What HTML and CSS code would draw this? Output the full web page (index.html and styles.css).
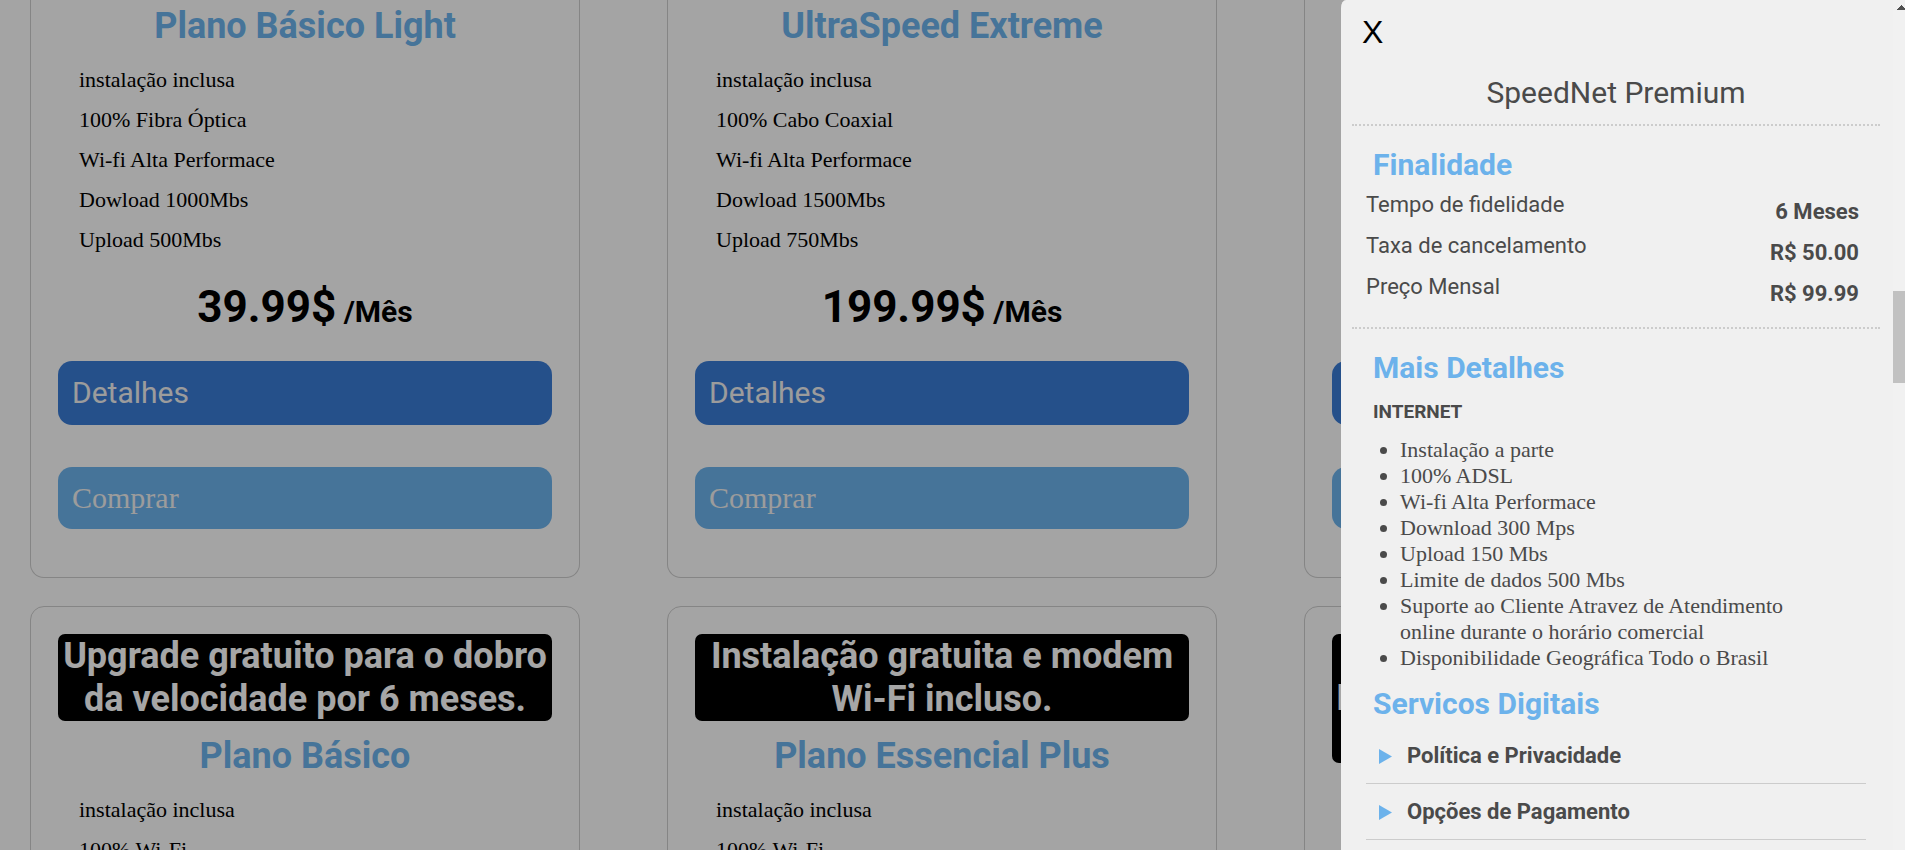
FILE: index.html
```html
<!DOCTYPE html>
<html lang="pt-BR">
<head>
<meta charset="utf-8">
<title>SpeedNet Premium</title>
<link rel="stylesheet" href="styles.css">
</head>
<body>
<main class="plans">
  <article class="plan plan--scrolled">
    <h2 class="plan__name">Plano Básico Light</h2>
    <ul class="plan__features">
      <li>instalação inclusa</li>
      <li>100% Fibra Óptica</li>
      <li>Wi-fi Alta Performace</li>
      <li>Dowload 1000Mbs</li>
      <li>Upload 500Mbs</li>
    </ul>
    <p class="plan__price">39.99$<small> /Mês</small></p>
    <button class="btn btn--details" type="button">Detalhes</button>
    <button class="btn btn--buy" type="button">Comprar</button>
  </article>
  <article class="plan plan--scrolled">
    <h2 class="plan__name">UltraSpeed Extreme</h2>
    <ul class="plan__features">
      <li>instalação inclusa</li>
      <li>100% Cabo Coaxial</li>
      <li>Wi-fi Alta Performace</li>
      <li>Dowload 1500Mbs</li>
      <li>Upload 750Mbs</li>
    </ul>
    <p class="plan__price">199.99$<small> /Mês</small></p>
    <button class="btn btn--details" type="button">Detalhes</button>
    <button class="btn btn--buy" type="button">Comprar</button>
  </article>
  <article class="plan plan--scrolled plan--end">
    <button class="btn btn--details" type="button" aria-label="Detalhes"></button>
    <button class="btn btn--buy" type="button" aria-label="Comprar"></button>
  </article>
  <article class="plan">
    <p class="plan__promo">Upgrade gratuito para o dobro da velocidade por 6 meses.</p>
    <h2 class="plan__name">Plano Básico</h2>
    <ul class="plan__features">
      <li>instalação inclusa</li>
      <li>100% Wi-Fi</li>
    </ul>
  </article>
  <article class="plan">
    <p class="plan__promo">Instalação gratuita e modem Wi-Fi incluso.</p>
    <h2 class="plan__name">Plano Essencial Plus</h2>
    <ul class="plan__features">
      <li>instalação inclusa</li>
      <li>100% Wi-Fi</li>
    </ul>
  </article>
  <article class="plan">
    <p class="plan__promo plan__promo--tall">I</p>
  </article>
</main>

<div class="backdrop"></div>

<aside class="drawer" role="dialog" aria-labelledby="drawer-title">
  <button class="drawer__close" type="button">X</button>
  <h1 class="drawer__title" id="drawer-title">SpeedNet Premium</h1>
  <section class="drawer__section">
    <h2 class="drawer__heading">Finalidade</h2>
    <dl class="terms">
      <div class="terms__row"><dt>Tempo de fidelidade</dt><dd>6 Meses</dd></div>
      <div class="terms__row"><dt>Taxa de cancelamento</dt><dd>R$ 50.00</dd></div>
      <div class="terms__row"><dt>Preço Mensal</dt><dd>R$ 99.99</dd></div>
    </dl>
  </section>
  <section class="drawer__section">
    <h2 class="drawer__heading">Mais Detalhes</h2>
    <h3 class="drawer__subheading">INTERNET</h3>
    <ul class="drawer__list">
      <li>Instalação a parte</li>
      <li>100% ADSL</li>
      <li>Wi-fi Alta Performace</li>
      <li>Download 300 Mps</li>
      <li>Upload 150 Mbs</li>
      <li>Limite de dados 500 Mbs</li>
      <li>Suporte ao Cliente Atravez de Atendimento online durante o horário comercial</li>
      <li>Disponibilidade Geográfica Todo o Brasil</li>
    </ul>
    <h2 class="drawer__heading">Servicos Digitais</h2>
    <div class="services">
      <details class="services__item"><summary><svg viewBox="0 0 13 15" aria-hidden="true"><path d="M0 0L13 7.5L0 15Z"/></svg>Política e Privacidade</summary></details>
      <details class="services__item"><summary><svg viewBox="0 0 13 15" aria-hidden="true"><path d="M0 0L13 7.5L0 15Z"/></svg>Opções de Pagamento</summary></details>
    </div>
  </section>
</aside>

<div class="scrollbar" aria-hidden="true">
  <svg class="scrollbar__up" viewBox="0 0 8 5"><path d="M0 5V4H1V3H2V2H3V1H4V0H5V1H6V2H7V3H8V5Z"/></svg>
  <div class="scrollbar__thumb"></div>
</div>
</body>
</html>
```
FILE: styles.css
```css
* { box-sizing: border-box; }

html, body { height: 100%; }

body {
  margin: 0;
  overflow: hidden;
  background: #fcfcfc;
  color: #000;
  font-family: Roboto, "Liberation Sans", sans-serif;
}

h1, h2, h3, p, ul, dl, dd { margin: 0; padding: 0; }

.plans {
  display: grid;
  grid-template-columns: repeat(3, 1fr);
  gap: 28px 87px;
  padding: 0 51px 0 30px;
}

.plan {
  display: flex;
  flex-direction: column;
  min-width: 0;
  padding: 27px 27px 48px;
  border: 1px solid #ccc;
  border-radius: 14px;
}

.plan--scrolled {
  padding-top: 5px;
  border-top: 0;
  border-radius: 0 0 14px 14px;
}

.plan--end { justify-content: flex-end; }

.plan__promo {
  margin-bottom: 14px;
  padding-top: 1px;
  border-radius: 7px;
  background: #000;
  color: #fff;
  font-size: 36px;
  font-weight: 700;
  line-height: 43px;
  text-align: center;
}

.plan__promo--tall {
  padding: 43px 4px;
  text-align: left;
}

.plan__name {
  color: #6cb2eb;
  font-size: 36px;
  font-weight: 700;
  line-height: 43px;
  text-align: center;
}

.plan__features {
  display: flex;
  flex-direction: column;
  gap: 14px;
  margin: 19px 0 28px 21px;
  list-style: none;
  font-family: "Liberation Serif", serif;
  font-size: 22px;
  line-height: 26px;
}

.plan__price {
  margin-bottom: 28px;
  font-size: 44px;
  font-weight: 700;
  line-height: 52px;
  text-align: center;
}

.plan__price small {
  font-size: 30px;
  line-height: 1;
}

.btn {
  padding: 14px;
  border: 0;
  border-radius: 14px;
  color: #f0f0f0;
  font-size: 30px;
  text-align: left;
}

.btn--details {
  min-height: 64px;
  margin-bottom: 42px;
  background: #3a7bd5;
  font-family: Roboto, sans-serif;
  line-height: 36px;
}

.btn--buy {
  min-height: 62px;
  background: #6cb2eb;
  font-family: "Liberation Serif", serif;
  line-height: 34px;
}

.backdrop {
  position: fixed;
  inset: 0;
  background: rgba(0, 0, 0, .35);
}

.drawer {
  position: fixed;
  top: 0;
  right: 12px;
  bottom: 0;
  width: 552px;
  padding: 13px 13px 0 11px;
  overflow: hidden;
  border-top-left-radius: 5px 8px;
  background: #f0f0f0;
  color: #4a4a4a;
}

.drawer__close {
  display: block;
  margin: 0 0 24px 10px;
  padding: 0;
  border: 0;
  background: none;
  color: #000;
  font-family: "Liberation Sans", sans-serif;
  font-size: 32px;
  line-height: 38px;
}

.drawer__title {
  padding-bottom: 13px;
  font-size: 30px;
  font-weight: 400;
  line-height: 36px;
  text-align: center;
}

.drawer__section {
  padding: 21px 14px 20px;
  border-top: 2px dotted #ccc;
}

.drawer__heading {
  padding-left: 7px;
  color: #6cb2eb;
  font-size: 30px;
  font-weight: 700;
  line-height: 36px;
}

.terms {
  display: grid;
  gap: 8px;
  padding: 9px 7px 0 0;
  font-size: 22px;
  line-height: 26px;
}

.terms__row {
  display: flex;
  justify-content: space-between;
}

.terms dd {
  padding-top: 7px;
  font-weight: 700;
}

.drawer__subheading {
  margin: 14px 0 13px;
  padding-left: 7px;
  font-size: 19px;
  font-weight: 700;
  line-height: 24px;
}

.drawer__list {
  margin-bottom: 15px;
  padding: 0 42px 0 34px;
  font-family: "Liberation Serif", serif;
  font-size: 22px;
  line-height: 26px;
}

.services { padding-top: 6px; }

.services__item { border-bottom: 1px solid #ccc; }

.services summary {
  display: flex;
  align-items: center;
  gap: 15px;
  padding: 15px 13px 14px;
  font-size: 22px;
  font-weight: 700;
  line-height: 26px;
  list-style: none;
}

.services svg {
  width: 13px;
  height: 15px;
  fill: #6cb2eb;
}

.scrollbar {
  position: fixed;
  top: 0;
  right: 0;
  bottom: 0;
  width: 12px;
  padding: 5px 0 0;
  background: #f1f1f1;
}

.scrollbar__up {
  display: block;
  width: 8px;
  height: 5px;
  margin: 0 0 281px 4px;
  fill: #505050;
}

.scrollbar__thumb {
  height: 92px;
  background: #c1c1c1;
}
```
